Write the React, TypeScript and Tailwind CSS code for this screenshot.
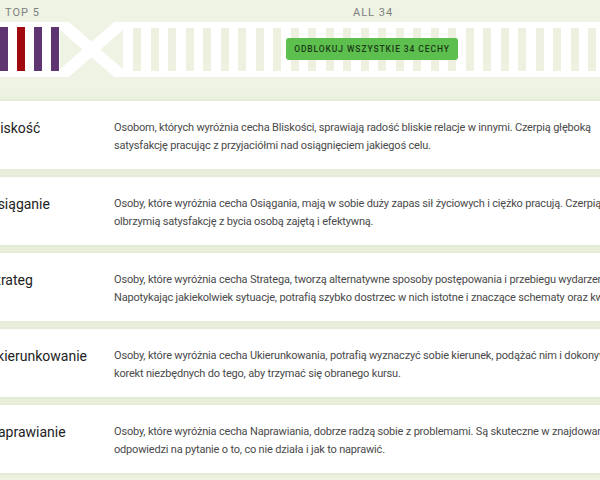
import React from "react";

const cards = [
  {
    title: "Bliskość",
    lines: [
      "Osobom, których wyróżnia cecha Bliskości, sprawiają radość bliskie relacje w innymi. Czerpią głęboką",
      "satysfakcję pracując z przyjaciółmi nad osiągnięciem jakiegoś celu.",
    ],
  },
  {
    title: "Osiąganie",
    lines: [
      "Osoby, które wyróżnia cecha Osiągania, mają w sobie duży zapas sił życiowych i ciężko pracują. Czerpią",
      "olbrzymią satysfakcję z bycia osobą zajętą i efektywną.",
    ],
  },
  {
    title: "Strateg",
    lines: [
      "Osoby, które wyróżnia cecha Stratega, tworzą alternatywne sposoby postępowania i przebiegu wydarzeń.",
      "Napotykając jakiekolwiek sytuacje, potrafią szybko dostrzec w nich istotne i znaczące schematy oraz kwestie.",
    ],
  },
  {
    title: "Ukierunkowanie",
    lines: [
      "Osoby, które wyróżnia cecha Ukierunkowania, potrafią wyznaczyć sobie kierunek, podążać nim i dokonywać",
      "korekt niezbędnych do tego, aby trzymać się obranego kursu.",
    ],
  },
  {
    title: "Naprawianie",
    lines: [
      "Osoby, które wyróżnia cecha Naprawiania, dobrze radzą sobie z problemami. Są skuteczne w znajdowaniu",
      "odpowiedzi na pytanie o to, co nie działa i jak to naprawić.",
    ],
  },
];

const topColors = ["#5e3571", "#5e3571", "#a00a0e", "#5e3571", "#5e3571"];

export default function App() {
  const allBars = Array.from({ length: 34 });
  return (
    <div
      className="w-[600px] h-[480px] overflow-hidden bg-[#eef3e3]"
      style={{ fontFamily: "Roboto, 'Noto Sans', sans-serif" }}
    >
      {/* Header labels */}
      <div className="relative h-[22px] text-[11px] tracking-[1px] text-[#808080]">
        <span className="absolute left-[5px] top-[6px] leading-[14px]">TOP 5</span>
        <span className="absolute left-[353px] top-[6px] leading-[14px]">ALL 34</span>
      </div>

      {/* Band */}
      <div className="flex h-[55px]">
        <div className="-ml-[20px] flex h-full shrink-0 gap-[9px] bg-white pb-[6px] pl-[3px] pr-[1px] pt-[5px]">
          {topColors.map((c, i) => (
            <div key={i} className="h-full w-[8px]" style={{ backgroundColor: c }} />
          ))}
        </div>
        <svg width="63" height="55" viewBox="0 0 63 55" className="shrink-0">
          <polygon points="0,0 9,0 63,47 63,55 54,55 0,8" fill="#ffffff" />
          <polygon points="0,55 9,55 63,8 63,0 54,0 0,47" fill="#ffffff" />
        </svg>
        <div className="relative flex h-full flex-1 gap-[9.5px] overflow-hidden bg-white pb-[6px] pl-[10px] pt-[6px]">
          {allBars.map((_, i) => (
            <div key={i} className="h-full w-[8px] shrink-0 bg-[#eef1df]" />
          ))}
          <button className="absolute left-[163px] top-[16px] flex h-[22px] w-[172px] items-center justify-center rounded-[3px] bg-[#5cbf4e] text-[8.5px] font-medium tracking-[0.9px] text-[#1c3a16]">
            ODBLOKUJ WSZYSTKIE 34 CECHY
          </button>
        </div>
      </div>

      {/* Cards */}
      <div className="mt-[24px] flex flex-col gap-[8px]">
        {cards.map((c) => (
          <div
            key={c.title}
            className="-ml-[20px] flex h-[68px] w-[700px] bg-white pl-[8px] pt-[18px] shadow-[0_0_6px_rgba(190,210,160,0.45)]"
          >
            <div className="w-[126px] shrink-0 text-[14px] leading-[18px] text-[#222222]">
              {c.title}
            </div>
            <div className="text-[11px] leading-[17.5px] tracking-[-0.18px] text-[#4a4a4a]">
              {c.lines.map((l, i) => (
                <div key={i} className="whitespace-nowrap">
                  {l}
                </div>
              ))}
            </div>
          </div>
        ))}
      </div>
    </div>
  );
}
